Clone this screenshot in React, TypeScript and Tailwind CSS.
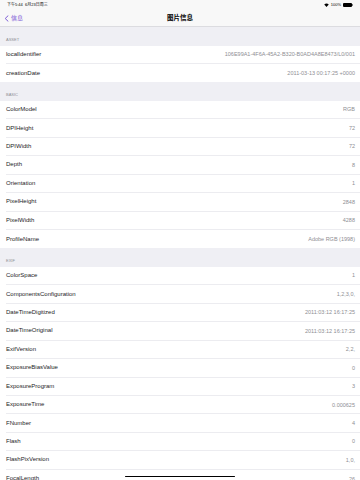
import React from 'react';

type Row = [string, string];

const sections: { title: string; rows: Row[] }[] = [
  {
    title: 'ASSET',
    rows: [
      ['localIdentifier', '106E99A1-4F6A-45A2-B320-B0AD4A8E8473/L0/001'],
      ['creationDate', '2011-03-13 00:17:25 +0000'],
    ],
  },
  {
    title: 'BASIC',
    rows: [
      ['ColorModel', 'RGB'],
      ['DPIHeight', '72'],
      ['DPIWidth', '72'],
      ['Depth', '8'],
      ['Orientation', '1'],
      ['PixelHeight', '2848'],
      ['PixelWidth', '4288'],
      ['ProfileName', 'Adobe RGB (1998)'],
    ],
  },
  {
    title: 'EXIF',
    rows: [
      ['ColorSpace', '1'],
      ['ComponentsConfiguration', '1,2,3,0,'],
      ['DateTimeDigitized', '2011:03:12 16:17:25'],
      ['DateTimeOriginal', '2011:03:12 16:17:25'],
      ['ExifVersion', '2,2,'],
      ['ExposureBiasValue', '0'],
      ['ExposureProgram', '3'],
      ['ExposureTime', '0.000625'],
      ['FNumber', '4'],
      ['Flash', '0'],
      ['FlashPixVersion', '1,0,'],
      ['FocalLength', '26'],
    ],
  },
];

export default function App() {
  return (
    <div
      className="relative w-[360px] h-[480px] overflow-hidden bg-[#efeff4] text-black"
      style={{ fontFamily: '"Liberation Sans", "Noto Sans CJK SC", sans-serif' }}
    >
      {/* status + nav */}
      <div className="bg-[#f8f8f8] border-b border-[#dcdce0]">
        <div className="h-[10px] flex items-center justify-between px-[7px] text-[4px]">
          <span>下午5:44&nbsp;&nbsp;6月23日周三</span>
          <div className="flex items-center gap-[2px]">
            <svg width="5" height="4" viewBox="0 0 10 8">
              <path d="M5 8 L0.5 3 A7 7 0 0 1 9.5 3 Z" fill="#000" />
            </svg>
            <span>100%</span>
            <div className="flex items-center">
              <div className="w-[9px] h-[4px] rounded-[1px] bg-black" />
              <div className="w-[1px] h-[2px] bg-black/50" />
            </div>
          </div>
        </div>
        <div className="relative h-[16px] flex items-center justify-center">
          <div className="absolute left-[4px] top-0 h-full flex items-center gap-[2px] text-[#7d5bd6] text-[6px]">
            <svg width="5" height="7" viewBox="0 0 5 7">
              <path d="M4 0.8 L1.2 3.5 L4 6.2" fill="none" stroke="#7d5bd6" strokeWidth="1" strokeLinecap="round" strokeLinejoin="round" />
            </svg>
            <span>信息</span>
          </div>
          <span className="text-[6.5px] font-semibold">图片信息</span>
        </div>
      </div>

      {sections.map((s) => (
        <div key={s.title}>
          <div className="h-[18.5px] flex items-end pl-[6px] pb-[3px] text-[4px] text-[#8e8e93]">{s.title}</div>
          <div className="bg-white">
            {s.rows.map(([k, v], i) => (
              <div key={k} className="pl-[6px]">
                <div
                  className={`h-[18.45px] flex items-center justify-between pr-[5px] ${
                    i < s.rows.length - 1 ? 'border-b border-[#ececf0]' : ''
                  }`}
                >
                  <span className="text-[6px] text-[#1c1c1e]">{k}</span>
                  <span className="text-[5.5px] text-[#8e8e93]">{v}</span>
                </div>
              </div>
            ))}
          </div>
        </div>
      ))}

      <div className="absolute left-[125px] bottom-[3px] w-[110px] h-[1.5px] rounded-full bg-black" />
    </div>
  );
}
